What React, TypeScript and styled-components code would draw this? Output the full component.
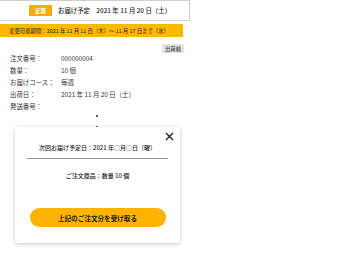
import * as React from 'react';
import styled, { createGlobalStyle } from 'styled-components';

const GlobalStyle = createGlobalStyle`
    html, body {
        margin: 0;
        padding: 0;
        background: #fff;
    }
    body {
        font-family: "Noto Sans CJK JP", "Noto Sans", sans-serif;
        color: #222;
    }
`;

const Page = styled.div`
    position: relative;
    width: 344px;
    height: 270px;
    overflow: hidden;
`;

const Column = styled.div`
    width: 190px;
    display: flex;
    flex-direction: column;
`;

const Header = styled.div`
    height: 21px;
    box-sizing: border-box;
    margin-left: -1px;
    border: 1px solid #cfcfcf;
    display: flex;
    align-items: center;
    padding-left: 29px;
    gap: 6px;
    font-size: 6.4px;
    font-weight: 500;
`;

const Badge = styled.span`
    background: #f8ab00;
    color: #fff;
    width: 23px;
    height: 11px;
    display: flex;
    align-items: center;
    justify-content: center;
    font-size: 5.5px;
    font-weight: 700;
`;

const Banner = styled.div`
    margin-top: 3px;
    width: 183px;
    height: 13px;
    background: #fbb900;
    display: flex;
    align-items: center;
    padding-left: 9px;
    box-sizing: border-box;
    font-size: 5.4px;
    white-space: nowrap;
`;

const StatusRow = styled.div`
    display: flex;
    justify-content: flex-end;
    padding-right: 6px;
    margin-top: 7px;
`;

const Status = styled.span`
    background: #e4e4e4;
    color: #444;
    width: 22px;
    height: 9px;
    display: flex;
    align-items: center;
    justify-content: center;
    font-size: 5.4px;
    font-weight: 500;
`;

const InfoList = styled.dl`
    margin: -1px 0 0 0;
    padding-left: 10px;
    display: grid;
    grid-template-columns: 51px 1fr;
    grid-auto-rows: 12px;
    align-items: center;
    font-size: 6.4px;
    color: #333;
`;

const Term = styled.dt`
    margin: 0;
`;

const Desc = styled.dd`
    margin: 0;
`;

const Dots = styled.div`
    display: flex;
    flex-direction: column;
    align-items: center;
    gap: 9px;
    margin-top: 3px;
    padding-left: 4px;
`;

const Dot = styled.span`
    width: 2px;
    height: 2px;
    border-radius: 50%;
    background: #222;
`;

const Modal = styled.div`
    position: absolute;
    left: 15px;
    top: 127px;
    width: 165px;
    height: 116px;
    background: #fff;
    border-radius: 2px;
    box-shadow: 0 1px 4px rgba(0, 0, 0, 0.22);
    display: flex;
    flex-direction: column;
    align-items: center;
    box-sizing: border-box;
    padding-top: 16px;
`;

const Close = styled.button`
    position: absolute;
    top: 5px;
    right: 6px;
    border: 0;
    background: none;
    padding: 0;
    width: 9px;
    height: 9px;
    display: flex;
    cursor: pointer;
`;

const NextDate = styled.div`
    width: 141px;
    padding-bottom: 6px;
    border-bottom: 1px solid #999;
    text-align: center;
    font-size: 6px;
    font-weight: 500;
`;

const Product = styled.div`
    margin-top: 12px;
    font-size: 6px;
    font-weight: 500;
`;

const Receive = styled.button`
    margin-top: 28px;
    width: 136px;
    height: 19px;
    border: 0;
    border-radius: 10px;
    background: #fdb300;
    color: #222;
    font-family: inherit;
    font-size: 6.6px;
    font-weight: 700;
    cursor: pointer;
`;

const rows: [string, string][] = [
    ['注文番号：', '000000004'],
    ['数量：', '10 個'],
    ['お届けコース：', '毎週'],
    ['出荷日：', '2021 年 11 月 20 日（土）'],
    ['発送番号：', ''],
];

export default function App() {
    return (
        <Page>
            <GlobalStyle />
            <Column>
                <Header>
                    <Badge>定期</Badge>
                    <span>お届け予定　2021 年 11 月 20 日（土）</span>
                </Header>
                <Banner>変更可能期間：2021 年 11 月 11 日（木）～ 11 月 17 日まで（水）</Banner>
                <StatusRow>
                    <Status>出荷前</Status>
                </StatusRow>
                <InfoList>
                    {rows.map(([term, value]) => (
                        <React.Fragment key={term}>
                            <Term>{term}</Term>
                            <Desc>{value}</Desc>
                        </React.Fragment>
                    ))}
                </InfoList>
                <Dots>
                    <Dot />
                    <Dot />
                </Dots>
            </Column>
            <Modal>
                <Close aria-label="閉じる">
                    <svg width="9" height="9" viewBox="0 0 9 9">
                        <path d="M1 1 L8 8 M8 1 L1 8" stroke="#222" strokeWidth="1.4" />
                    </svg>
                </Close>
                <NextDate>次回お届け予定日：2021 年○月○日（曜）</NextDate>
                <Product>ご注文商品：数量 10 個</Product>
                <Receive>上記のご注文分を受け取る</Receive>
            </Modal>
        </Page>
    );
}
